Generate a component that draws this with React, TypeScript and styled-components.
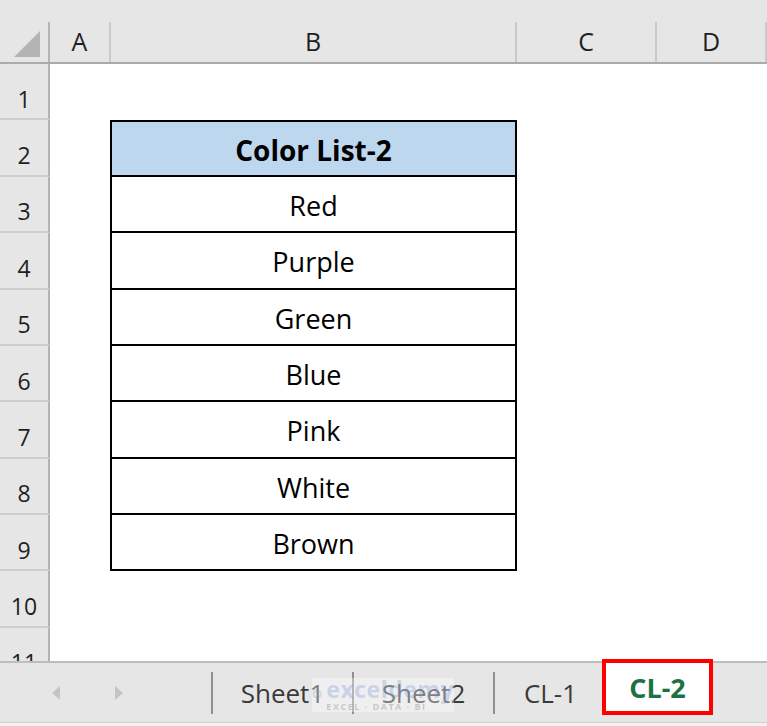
import styled, { createGlobalStyle } from 'styled-components';

const columns = ['A', 'B', 'C', 'D'];
const colors = ['Red', 'Purple', 'Green', 'Blue', 'Pink', 'White', 'Brown'];
const tabs = [
  { name: 'Sheet1', width: 139 },
  { name: 'Sheet2', width: 139 },
  { name: 'CL-1', width: 111 },
];

const GRID = '50px 61px 406px 140px 1fr';
const ROW_H = 56.375;

const GlobalStyle = createGlobalStyle`
  * { box-sizing: border-box; }
  body {
    margin: 0;
    background: #ffffff;
    font-family: "Open Sans", "Noto Sans", sans-serif;
  }
`;

const Window = styled.div`
  width: 767px;
  height: 726px;
  display: flex;
  flex-direction: column;
  overflow: hidden;
  background: #ffffff;
`;

const Sheet = styled.div`
  flex: 1;
  overflow: hidden;
`;

const HeaderRow = styled.div`
  display: grid;
  grid-template-columns: ${GRID};
  height: 64px;
  padding-top: 22px;
  background: #e6e6e6;
  border-bottom: 2px solid #ababab;
`;

const ColHeader = styled.div`
  display: flex;
  align-items: center;
  justify-content: center;
  padding-bottom: 3px;
  border-right: 2px solid #c9c9c9;
  font-size: 25px;
  color: #1f1f1f;
`;

const Corner = styled.div`
  border-right: 2px solid #b3b3b3;
  display: flex;
  align-items: flex-end;
  justify-content: flex-end;
  padding: 0 8px 5px 0;
`;

const Row = styled.div`
  display: grid;
  grid-template-columns: ${GRID};
  height: ${ROW_H}px;
`;

const RowHead = styled.div`
  display: flex;
  align-items: center;
  justify-content: center;
  padding-top: 15px;
  background: #e6e6e6;
  border-right: 2px solid #b3b3b3;
  border-bottom: 2px solid #cdcdcd;
  font-size: 23px;
  color: #1f1f1f;
`;

const Cell = styled.div`
  background: #ffffff;
`;

const TableCell = styled.div<{ $head?: boolean; $first?: boolean }>`
  display: flex;
  align-items: center;
  justify-content: center;
  padding-top: 3px;
  margin-left: -1px;
  border: 2px solid #000000;
  border-top: ${(p) => (p.$first ? '2px solid #000000' : 'none')};
  background: ${(p) => (p.$head ? '#bdd7ee' : '#ffffff')};
  font-size: ${(p) => (p.$head ? '28px' : '27px')};
  font-weight: ${(p) => (p.$head ? 700 : 400)};
  color: #000000;
`;

const TabBar = styled.div`
  position: relative;
  display: flex;
  align-items: center;
  height: 61px;
  background: #e6e6e6;
  border-top: 2px solid #bdbdbd;
`;

const Footer = styled.div`
  height: 4px;
  background: #f2f2f2;
  border-top: 1px solid #cfcfcf;
`;

const Nav = styled.div`
  width: 211px;
  height: 100%;
  display: flex;
  align-items: center;
  padding-left: 52px;
  gap: 55px;
`;

const Divider = styled.div`
  width: 2px;
  height: 42px;
  background: #8f8f8f;
`;

const Tab = styled.div<{ $width: number; $active?: boolean }>`
  width: ${(p) => p.$width}px;
  height: ${(p) => (p.$active ? '48px' : '100%')};
  align-self: ${(p) => (p.$active ? 'flex-start' : 'center')};
  display: flex;
  align-items: center;
  justify-content: center;
  font-size: ${(p) => (p.$active ? '27px' : '26px')};
  font-weight: ${(p) => (p.$active ? 700 : 400)};
  color: ${(p) => (p.$active ? '#1e7145' : '#3a3a3a')};
  background: ${(p) => (p.$active ? '#ffffff' : 'transparent')};
  outline: ${(p) => (p.$active ? '4px solid #ff0000' : 'none')};
`;

const Watermark = styled.div`
  position: absolute;
  left: 312px;
  top: 15px;
  width: 142px;
  height: 34px;
  display: flex;
  align-items: flex-start;
  gap: 4px;
  background: rgba(255, 255, 255, 0.35);
  pointer-events: none;
`;

const MarkText = styled.div`
  display: flex;
  flex-direction: column;
  line-height: 1;
`;

const MarkName = styled.span`
  font-size: 23px;
  font-weight: 700;
  color: rgba(110, 140, 210, 0.3);
  letter-spacing: 0.5px;
`;

const MarkTag = styled.span`
  margin-top: 1px;
  font-size: 9px;
  font-weight: 700;
  letter-spacing: 1.5px;
  color: rgba(120, 120, 120, 0.35);
`;

const Arrow = ({ dir }: { dir: 'left' | 'right' }) => (
  <svg width="8" height="14" viewBox="0 0 8 14">
    <path d={dir === 'left' ? 'M8 0 L0 7 L8 14 Z' : 'M0 0 L8 7 L0 14 Z'} fill="#c4c4c4" />
  </svg>
);

const App = () => {
  const rows = Array.from({ length: 11 }, (_, i) => i + 1);
  return (
    <Window>
      <GlobalStyle />
      <Sheet>
        <HeaderRow>
          <Corner>
            <svg width="26" height="26" viewBox="0 0 26 26">
              <path d="M26 0 L26 26 L0 26 Z" fill="#b4b4b4" />
            </svg>
          </Corner>
          {columns.map((c) => (
            <ColHeader key={c}>{c}</ColHeader>
          ))}
        </HeaderRow>
        {rows.map((r) => {
          const idx = r - 2;
          return (
            <Row key={r}>
              <RowHead>{r}</RowHead>
              <Cell />
              {r === 2 ? (
                <TableCell $head $first>
                  Color List-2
                </TableCell>
              ) : idx >= 1 && idx <= colors.length ? (
                <TableCell>{colors[idx - 1]}</TableCell>
              ) : (
                <Cell />
              )}
              <Cell />
              <Cell />
            </Row>
          );
        })}
      </Sheet>
      <TabBar>
        <Nav>
          <Arrow dir="left" />
          <Arrow dir="right" />
        </Nav>
        {tabs.map((t) => (
          <>
            <Divider key={t.name + '-d'} />
            <Tab key={t.name} $width={t.width}>
              {t.name}
            </Tab>
          </>
        ))}
        <Tab $width={103} $active>
          CL-2
        </Tab>
        <Watermark>
          <svg width="28" height="32" viewBox="0 0 28 32">
            <path
              d="M14 2 L26 9 L26 23 L14 30 L2 23 L2 9 Z M14 9 L20 12.5 L20 19.5 L14 23 L8 19.5 L8 12.5 Z"
              fill="rgba(120,140,190,0.22)"
              fillRule="evenodd"
            />
          </svg>
          <MarkText>
            <MarkName>exceldemy</MarkName>
            <MarkTag>EXCEL · DATA · BI</MarkTag>
          </MarkText>
        </Watermark>
      </TabBar>
      <Footer />
    </Window>
  );
};

export default App;
